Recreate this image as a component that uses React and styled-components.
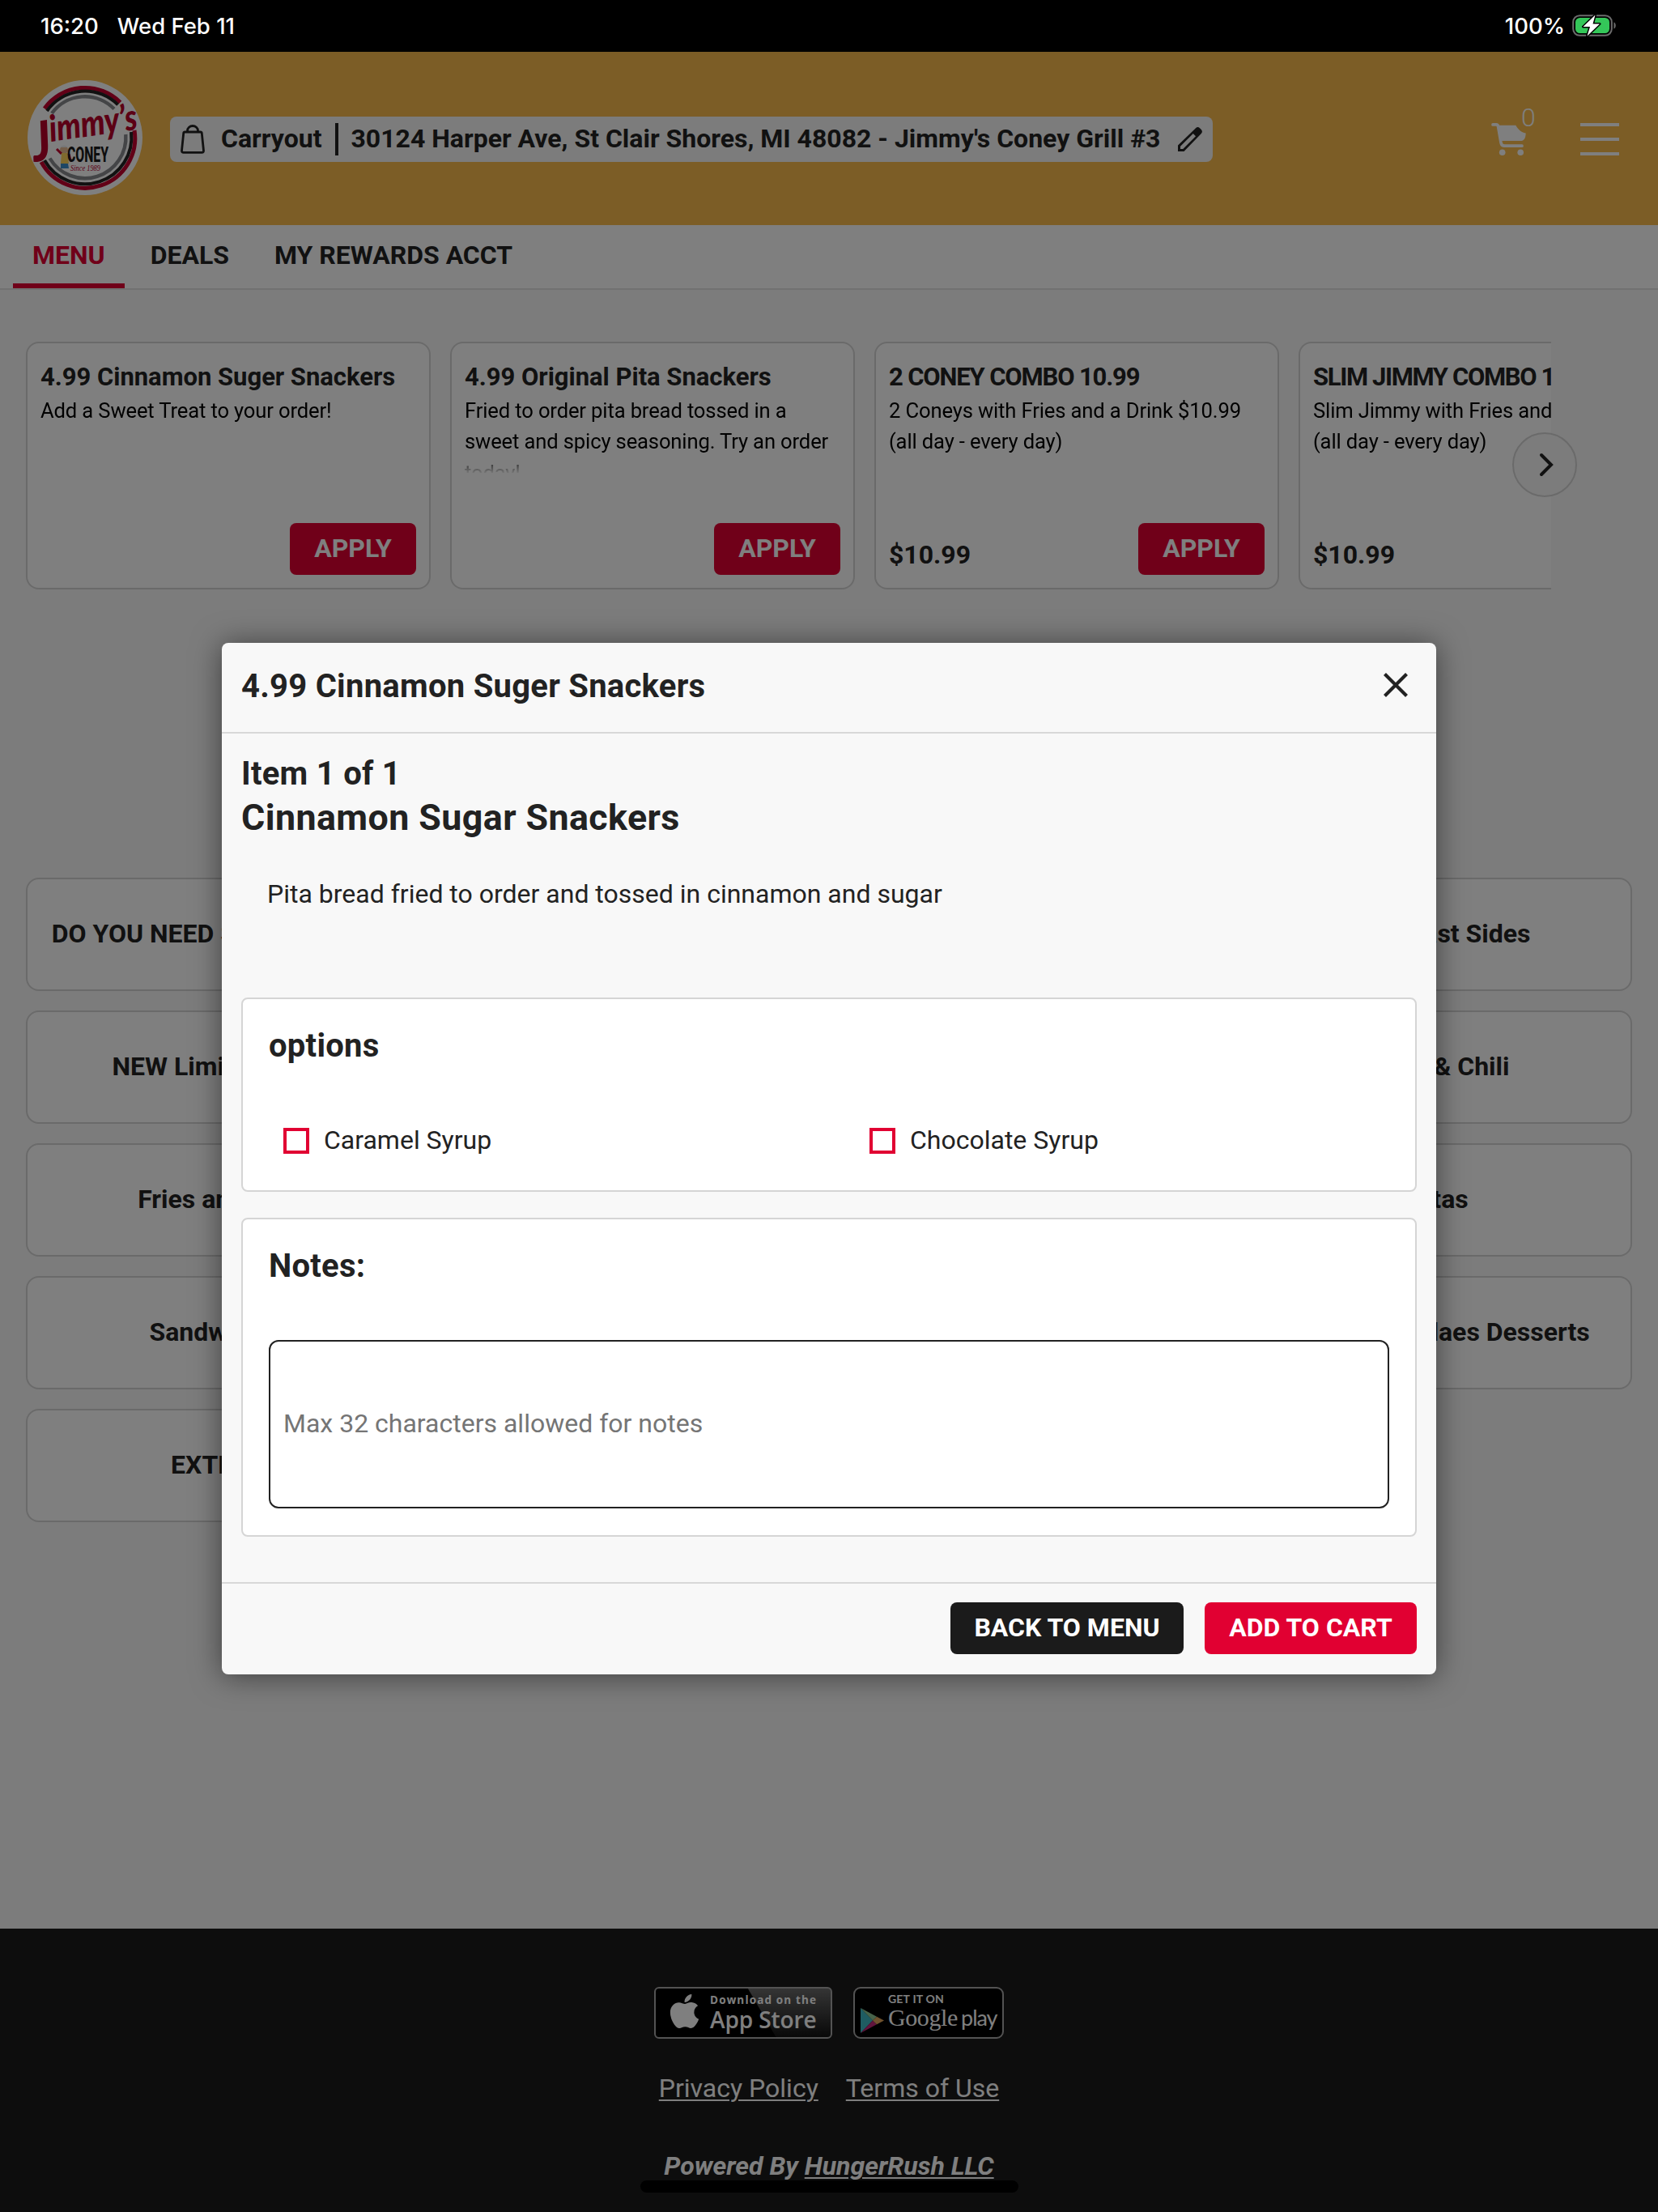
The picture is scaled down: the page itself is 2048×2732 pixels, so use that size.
import React, { useState } from 'react'
import styled, { createGlobalStyle } from 'styled-components'
import { FaApple } from 'react-icons/fa'

const promos = [
  { id: 1, title: '4.99 Cinnamon Suger Snackers', text: 'Add a Sweet Treat to your order!' },
  {
    id: 2,
    title: '4.99 Original Pita Snackers',
    text: 'Fried to order pita bread tossed in a sweet and spicy seasoning. Try an order today!',
  },
  {
    id: 3,
    title: '2 CONEY COMBO 10.99',
    text: '2 Coneys with Fries and a Drink $10.99 (all day - every day)',
    price: '$10.99',
    spacing: '-1.15px',
  },
  {
    id: 4,
    title: 'SLIM JIMMY COMBO 10.99',
    text: 'Slim Jimmy with Fries and a Drink $10.99 (all day - every day)',
    price: '$10.99',
    spacing: '-1.35px',
  },
]

const categories = [
  { title: 'DO YOU NEED SILVERWARE?', column: 1 },
  { title: 'Breakfast Sides', column: 4 },
  { title: 'NEW Limited Time', column: 1 },
  { title: 'Soup & Chili', column: 4 },
  { title: 'Fries and Tots', column: 1 },
  { title: 'Pitas', column: 4 },
  { title: 'Sandwiches', column: 1 },
  { title: 'Shakes Sundaes Desserts', column: 4 },
  { title: 'EXTRAS', column: 1 },
]

const syrups = ['Caramel Syrup', 'Chocolate Syrup']

function BatteryIcon() {
  return (
    <svg width="56" height="28" viewBox="0 0 56 28">
      <rect x="1.2" y="1.2" width="47.6" height="24.6" rx="8" fill="none" stroke="#6b6b6b" strokeWidth="2" />
      <rect x="4" y="4" width="42" height="19" rx="5.5" fill="#34c759" />
      <path d="M51.5 9.5c3 1 3 7 0 8z" fill="#6b6b6b" />
      <path
        d="M28.5 0.5L13.5 15h8.5l-3.5 11.5L34 11.5h-8.5z"
        fill="#fff"
        stroke="#000"
        strokeWidth="3"
        paintOrder="stroke"
        strokeLinejoin="round"
      />
    </svg>
  )
}

function Logo() {
  return (
    <svg width="142" height="142" viewBox="-71 -71 142 142" overflow="visible">
      <circle r="71" fill="#fff" />
      <g fill="none">
        {/* upper arcs */}
        <path d="M-50 -36A61.6 61.6 0 0 1 43.5 -43.6" stroke="#c4002e" strokeWidth="5" />
        <path d="M-47 -33A57.4 57.4 0 0 1 40.6 -40.6" stroke="#222" strokeWidth="4" />
        <path d="M-41 -30A50.5 50.5 0 0 1 36 -35.5" stroke="#888b8f" strokeWidth="4.4" />
        {/* lower arcs */}
        <path d="M61 -9A61.6 61.6 0 0 1 -54 30" stroke="#c4002e" strokeWidth="5" />
        <path d="M57 -7A57.4 57.4 0 0 1 -50 28" stroke="#222" strokeWidth="4" />
        <path d="M50.3 -4A50.5 50.5 0 0 1 -43.5 25.5" stroke="#888b8f" strokeWidth="4.4" />
      </g>
      <LogoScript x="-66" y="21" textLength="133" lengthAdjust="spacingAndGlyphs" transform="rotate(-8)">
        <tspan fontSize="68">J</tspan>
        <tspan fontSize="45" dy="-22">
          immy’s
        </tspan>
      </LogoScript>
      <g>
        <circle cx="-26" cy="15" r="5" fill="#e8bd94" />
        <path d="M-31 12q5-5 10 0z" fill="#eee" />
        <path d="M-29 20L-35 14" stroke="#c4002e" strokeWidth="3" />
        <path d="M-29 19h7l2 13h-10z" fill="#ffd45c" />
        <path d="M-20 20l2 8" stroke="#c4002e" strokeWidth="3" />
        <path d="M-30 32h9l1 6h-10z" fill="#3d8fcb" />
      </g>
      <LogoBlock x="-22" y="30" fontSize="25" textLength="51" lengthAdjust="spacingAndGlyphs">CONEY</LogoBlock>
      <LogoSince x="-18" y="41" fontSize="10" textLength="37" lengthAdjust="spacingAndGlyphs">Since 1989</LogoSince>
    </svg>
  )
}

function BagIcon() {
  return (
    <svg width="30" height="36" viewBox="0 0 30 36" fill="none" stroke="#222" strokeWidth="2.8" strokeLinejoin="round">
      <path d="M5.5 9h19q1.6 0 1.8 1.6l2.2 21.4q.2 2.4-2.2 2.4H3.7Q1.3 34.4 1.5 32L3.7 10.6Q3.9 9 5.5 9z" />
      <path d="M8.5 9V7.5a6.5 6 0 0 1 13 0V9" />
    </svg>
  )
}

function PencilIcon() {
  return (
    <svg width="30" height="30" viewBox="0 0 30 30">
      <path
        fill="#222"
        fillRule="evenodd"
        d="M0 22.5L22 1.2q2.5-2.2 5 0l1.8 1.9q2.2 2.4 0 4.9L7.5 30H0zM3 23.7V27h3.3L22 11.2 18.8 8z"
      />
    </svg>
  )
}

function CartIcon() {
  return (
    <svg width="44" height="40" viewBox="0 0 44 40">
      <path d="M2 1.9h4.2q2 0 2.4 2.6L12 24.2q.7 4 4.5 4H38" fill="none" stroke="#fff" strokeWidth="3.7" strokeLinecap="round" />
      <path d="M8 2.7h22.3c2.5 4.5 6.5 9 12.4 9.7-.3 5.6-1.5 9.7-7 9.7H11z" fill="#fff" />
      <circle cx="13.7" cy="36.2" r="3.8" fill="#fff" />
      <circle cx="36.2" cy="36.2" r="3.8" fill="#fff" />
    </svg>
  )
}

function PlayIcon() {
  return (
    <svg width="29" height="31" viewBox="0 0 29 31">
      <path d="M0 0v31l15-15.5z" fill="#3fb8c4" />
      <path d="M0 0l15 15.5 5-4.7z" fill="#8fc795" />
      <path d="M0 31l15-15.5 5 4.7z" fill="#c2287a" />
      <path d="M20 10.8l9 4.7-9 4.7-5-4.7z" fill="#e0a45c" />
    </svg>
  )
}

function App() {
  const [checked, setChecked] = useState([])
  const [notes, setNotes] = useState('')

  const toggle = (name) => {
    setChecked(checked.includes(name) ? checked.filter((n) => n !== name) : [...checked, name])
  }

  return (
    <>
      <GlobalStyle />
      <PageStyled>
        <StatusBar>
          <StatusGroup>
            <span>16:20</span>
            <span>Wed Feb 11</span>
          </StatusGroup>
          <StatusBattery>
            <span>100%</span>
            <BatteryIcon />
          </StatusBattery>
        </StatusBar>

        <HeaderStyled>
          <Logo />
          <LocationPill>
            <BagIcon />
            <Method>Carryout</Method>
            <Address>30124 Harper Ave, St Clair Shores, MI 48082 - Jimmy's Coney Grill #3</Address>
            <PencilIcon />
          </LocationPill>
          <CartButton aria-label="Cart">
            <CartIcon />
            <CartCount>0</CartCount>
          </CartButton>
          <Hamburger aria-label="Menu">
            <i />
            <i />
            <i />
          </Hamburger>
        </HeaderStyled>

        <NavStyled>
          <NavItem $active>MENU</NavItem>
          <NavItem>DEALS</NavItem>
          <NavItem>MY REWARDS ACCT</NavItem>
        </NavStyled>

        <MainStyled>
          <Carousel>
            <PromoList>
              {promos.map((promo) => (
                <PromoCard key={promo.id}>
                  <PromoTitle $spacing={promo.spacing}>{promo.title}</PromoTitle>
                  <PromoText>{promo.text}</PromoText>
                  <PromoBottom>
                    <Price>{promo.price}</Price>
                    <Button $width="156px">APPLY</Button>
                  </PromoBottom>
                </PromoCard>
              ))}
            </PromoList>
            <NextButton aria-label="Next">
              <svg width="18" height="30" viewBox="0 0 18 30" fill="none" stroke="#222" strokeWidth="4" strokeLinecap="round">
                <path d="M3 3l12 12L3 27" />
              </svg>
            </NextButton>
          </Carousel>

          <CategoryGrid>
            {categories.map((category) => (
              <CategoryCard key={category.title} $column={category.column}>
                {category.title}
              </CategoryCard>
            ))}
          </CategoryGrid>
        </MainStyled>

        <FooterStyled>
          <Badges>
            <AppleBadge>
              <FaApple />
              <BadgeText>
                <small>Download on the</small>
                <strong>App Store</strong>
              </BadgeText>
            </AppleBadge>
            <GoogleBadge>
              <PlayIcon />
              <GoogleText>
                <small>GET IT ON</small>
                <div>
                  Google <span>play</span>
                </div>
              </GoogleText>
            </GoogleBadge>
          </Badges>
          <FooterLinks>
            <a href="#privacy">Privacy Policy</a>
            <a href="#terms">Terms of Use</a>
          </FooterLinks>
          <Powered>
            Powered By <a href="#powered">HungerRush LLC</a>
          </Powered>
        </FooterStyled>
      </PageStyled>

      {/* Item dialog */}
      <Overlay>
        <ModalStyled role="dialog">
          <ModalHeader>
            <h2>4.99 Cinnamon Suger Snackers</h2>
            <CloseButton aria-label="Close">
              <svg width="30" height="30" viewBox="0 0 30 30" stroke="#222" strokeWidth="4.2">
                <path d="M1.5 1.5l27 27M28.5 1.5l-27 27" />
              </svg>
            </CloseButton>
          </ModalHeader>
          <ModalBody>
            <ItemCount>Item 1 of 1</ItemCount>
            <ItemName>Cinnamon Sugar Snackers</ItemName>
            <ItemText>Pita bread fried to order and tossed in cinnamon and sugar</ItemText>
            <Panel>
              <PanelTitle>options</PanelTitle>
              <Options>
                {syrups.map((name) => (
                  <Option key={name} onClick={() => toggle(name)}>
                    <Check $on={checked.includes(name)} />
                    {name}
                  </Option>
                ))}
              </Options>
            </Panel>
            <Panel>
              <PanelTitle>Notes:</PanelTitle>
              <NotesInput
                value={notes}
                maxLength={32}
                placeholder="Max 32 characters allowed for notes"
                onChange={(e) => setNotes(e.target.value)}
              />
            </Panel>
          </ModalBody>
          <ModalFooter>
            <Button $dark $width="288px">BACK TO MENU</Button>
            <Button $width="262px">ADD TO CART</Button>
          </ModalFooter>
        </ModalStyled>
      </Overlay>
      <HomeIndicator />
    </>
  )
}

const GlobalStyle = createGlobalStyle`
  * {
    box-sizing: border-box;
  }
  body {
    margin: 0;
    background: #f8f8f8;
    color: #222;
    font-family: Roboto, "Liberation Sans", sans-serif;
    font-size: 32px;
  }
  h2, h3, h4, p {
    margin: 0;
  }
  svg {
    display: block;
    flex-shrink: 0;
  }
  button {
    border: 0;
    padding: 0;
    background: none;
    font-family: inherit;
    cursor: pointer;
  }
`

const PageStyled = styled.div`
  width: 2048px;
  height: 2732px;
  display: flex;
  flex-direction: column;
  overflow: hidden;
`

const StatusBar = styled.div`
  height: 64px;
  flex-shrink: 0;
  background: #000;
  color: #fff;
  display: flex;
  align-items: center;
  justify-content: space-between;
  padding: 0 50px;
  font-family: Inter, sans-serif;
  font-size: 27.5px;
  font-weight: 500;
`

const StatusGroup = styled.div`
  display: flex;
  gap: 23px;
`

const StatusBattery = styled.div`
  display: flex;
  align-items: center;
  gap: 9px;
`

const HeaderStyled = styled.header`
  height: 214px;
  flex-shrink: 0;
  background: #f8ba4c;
  display: flex;
  align-items: center;
  padding: 0 48px 2px 34px;
`

const LogoScript = styled.text`
  font-family: Lato, sans-serif;
  font-weight: 900;
  font-style: italic;
  fill: #b8002b;
`

const LogoBlock = styled.text`
  font-family: Roboto, sans-serif;
  font-weight: 800;
  fill: #1b1b1b;
`

const LogoSince = styled.text`
  font-family: "Liberation Serif", serif;
  font-style: italic;
  fill: #b8002b;
`

const LocationPill = styled.div`
  width: 1288px;
  height: 56px;
  margin: 3px 0 0 34px;
  padding: 0 13px;
  border-radius: 8px;
  background: #f8f8f8;
  display: flex;
  align-items: center;
  font-weight: 700;
`

const Method = styled.span`
  margin-left: 20px;
  padding-right: 17px;
  padding-bottom: 2px;
  border-right: 4px solid #222;
  line-height: 38px;
`

const Address = styled.span`
  flex: 1;
  margin-left: 15px;
  padding-bottom: 2px;
  white-space: nowrap;
`

const CartButton = styled.button`
  position: relative;
  margin: 3px 0 0 344px;
`

const CartCount = styled.span`
  position: absolute;
  left: 37px;
  top: -26px;
  color: #fff;
  font-size: 32px;
  font-weight: 300;
`

const Hamburger = styled.button`
  margin: 3px 0 0 auto;
  width: 48px;
  height: 40px;
  display: flex;
  flex-direction: column;
  justify-content: space-between;
  i {
    width: 100%;
    height: 4px;
    background: #fff;
  }
`

const NavStyled = styled.nav`
  height: 80px;
  flex-shrink: 0;
  background: #fff;
  border-bottom: 2px solid #e3e3e3;
  display: flex;
  gap: 8px;
  padding-left: 16px;
`

const NavItem = styled.a`
  display: flex;
  align-items: center;
  padding: 2px 24px 0;
  border-bottom: 6px solid ${({ $active }) => ($active ? '#e10032' : 'transparent')};
  color: ${({ $active }) => ($active ? '#e10032' : '#222')};
  font-weight: 700;
`

const MainStyled = styled.main`
  height: 2024px;
  flex-shrink: 0;
  padding: 64px 32px 0;
`

const Carousel = styled.div`
  position: relative;
  width: 1884px;
`

const PromoList = styled.div`
  display: flex;
  gap: 24px;
  overflow: hidden;
`

const PromoCard = styled.article`
  width: 500px;
  height: 306px;
  flex-shrink: 0;
  display: flex;
  flex-direction: column;
  padding: 22px 16px 16px;
  border: 2px solid #d5d5d5;
  border-radius: 16px;
  background: #fff;
`

const PromoTitle = styled.h4`
  font-size: 31px;
  font-weight: 700;
  line-height: 40px;
  letter-spacing: ${({ $spacing }) => $spacing || '-0.02px'};
  white-space: nowrap;
`

const PromoText = styled.p`
  height: 96px;
  margin-top: 2px;
  overflow: hidden;
  color: #000;
  font-size: 25.6px;
  line-height: 38.4px;
  letter-spacing: -0.14px;
  /* third line fades out */
  mask-image: linear-gradient(#000 74px, transparent 98px);
`

const PromoBottom = styled.div`
  margin-top: auto;
  display: flex;
  align-items: flex-end;
  justify-content: space-between;
`

const Price = styled.span`
  font-weight: 700;
  line-height: 50px;
`

const Button = styled.button`
  width: ${({ $width }) => $width};
  height: 64px;
  padding-bottom: 2px;
  border-radius: 8px;
  background: ${({ $dark }) => ($dark ? '#1b1b1b' : '#e10032')};
  color: #fff;
  font-size: 32px;
  font-weight: 700;
`

const NextButton = styled.button`
  position: absolute;
  top: 112px;
  right: -32px;
  width: 80px;
  height: 80px;
  padding-left: 3px;
  display: flex;
  align-items: center;
  justify-content: center;
  border: 2px solid #d5d5d5;
  border-radius: 50%;
  background: #f8f8f8;
`

const CategoryGrid = styled.div`
  display: grid;
  grid-template-columns: repeat(4, 1fr);
  gap: 24px;
  margin-top: 356px;
`

const CategoryCard = styled.div`
  grid-column: ${({ $column }) => $column};
  height: 140px;
  padding-bottom: 3px;
  display: flex;
  align-items: center;
  justify-content: center;
  border: 2px solid #d5d5d5;
  border-radius: 16px;
  background: #fff;
  font-weight: 700;
  white-space: nowrap;
`

const FooterStyled = styled.footer`
  flex: 1;
  background: #1b1b1b;
  color: #fff;
  display: flex;
  flex-direction: column;
  align-items: center;
  padding-top: 72px;
  a {
    color: inherit;
    text-underline-offset: 3px;
    text-decoration-thickness: 2px;
  }
`

const Badges = styled.div`
  display: flex;
  gap: 26px;
`

const AppleBadge = styled.div`
  width: 220px;
  height: 64px;
  display: flex;
  padding: 8px 0 0 17px;
  gap: 13px;
  border: 2px solid #a6a6a6;
  border-radius: 6px;
  background: linear-gradient(60deg, #000 59%, transparent 59.5%), linear-gradient(#6a6a6a, #111);
  svg {
    width: 37px;
    height: 48px;
    margin-top: -4px;
  }
`

const BadgeText = styled.div`
  display: flex;
  flex-direction: column;
  font-family: "Open Sans", sans-serif;
  white-space: nowrap;
  small {
    font-size: 13.5px;
    font-weight: 700;
    line-height: 12px;
    letter-spacing: 1.15px;
  }
  strong {
    font-size: 28px;
    font-weight: 600;
    line-height: 36px;
    letter-spacing: -0.1px;
  }
`

const GoogleBadge = styled.div`
  width: 186px;
  height: 64px;
  display: flex;
  padding: 24px 0 0 7px;
  gap: 5px;
  border: 2px solid #a6a6a6;
  border-radius: 9px;
  background: #000;
`

const GoogleText = styled.div`
  margin-top: -19px;
  white-space: nowrap;
  font-family: "Liberation Serif", serif;
  font-size: 30px;
  line-height: 30px;
  letter-spacing: -0.4px;
  small {
    display: block;
    font-family: Lato, sans-serif;
    font-size: 14px;
    font-weight: 700;
    line-height: 16px;
    letter-spacing: 0.2px;
  }
  span {
    margin-left: -3px;
    font-family: Lato, sans-serif;
    font-size: 27px;
    font-weight: 400;
    letter-spacing: -1px;
  }
`

const FooterLinks = styled.div`
  display: flex;
  gap: 34px;
  margin-top: 37px;
  line-height: 48px;
`

const Powered = styled.p`
  margin-top: 48px;
  line-height: 48px;
  font-weight: 700;
  font-style: italic;
`

const Overlay = styled.div`
  position: absolute;
  left: 0;
  top: 64px;
  width: 2048px;
  height: 2668px;
  display: flex;
  justify-content: center;
  align-items: flex-start;
  padding-top: 729.5px;
  background: rgba(0, 0, 0, 0.5);
`

const ModalStyled = styled.section`
  width: 1500px;
  border-radius: 8px;
  background: #f8f8f8;
  box-shadow: 0 2px 36px rgba(0, 0, 0, 0.5);
`

const ModalHeader = styled.div`
  height: 112px;
  padding: 0 35px 2px 24px;
  display: flex;
  align-items: center;
  justify-content: space-between;
  border-bottom: 2px solid #d8d8d8;
  h2 {
    font-size: 40px;
    font-weight: 700;
    letter-spacing: 0.26px;
  }
`

const CloseButton = styled.button`
  margin-bottom: 3px;
`

const ModalBody = styled.div`
  padding: 26px 24px 56px;
`

const ItemCount = styled.h3`
  font-size: 40px;
  font-weight: 700;
  line-height: 48px;
  letter-spacing: 0.26px;
`

const ItemName = styled.h3`
  margin-top: 3px;
  font-size: 44.8px;
  font-weight: 700;
  line-height: 54px;
  letter-spacing: 0.4px;
`

const ItemText = styled.p`
  margin: 43px 0 104px;
  padding-left: 32px;
  line-height: 48px;
`

const Panel = styled.div`
  padding: 33px 32px;
  border: 2px solid #d5d5d5;
  border-radius: 8px;
  background: #fff;
  & + & {
    margin-top: 32px;
  }
`

const PanelTitle = styled.h4`
  padding-top: 1px;
  font-size: 40px;
  font-weight: 700;
  line-height: 48px;
  letter-spacing: 0.26px;
`

const Options = styled.div`
  display: grid;
  grid-template-columns: 724px 1fr;
  padding: 77px 0 12px 18px;
`

const Option = styled.label`
  height: 32px;
  display: flex;
  align-items: flex-start;
  gap: 18px;
  line-height: 30px;
`

const Check = styled.span`
  width: 32px;
  height: 32px;
  border: 4px solid #e10032;
  background: ${({ $on }) => ($on ? '#e10032' : '#fff')};
`

const NotesInput = styled.input`
  display: block;
  width: 100%;
  height: 208px;
  margin-top: 67px;
  padding: 0 16px 2px;
  border: 2px solid #222;
  border-radius: 12px;
  background: #fff;
  color: #222;
  font-family: inherit;
  font-size: 32px;
  &::placeholder {
    color: #757575;
  }
`

const ModalFooter = styled.div`
  display: flex;
  justify-content: flex-end;
  gap: 26px;
  padding: 23px 24px 25px;
  border-top: 2px solid #d8d8d8;
`

const HomeIndicator = styled.div`
  position: absolute;
  left: 791px;
  top: 2693px;
  width: 467px;
  height: 15px;
  border-radius: 8px;
  background: #000;
`

export default App
